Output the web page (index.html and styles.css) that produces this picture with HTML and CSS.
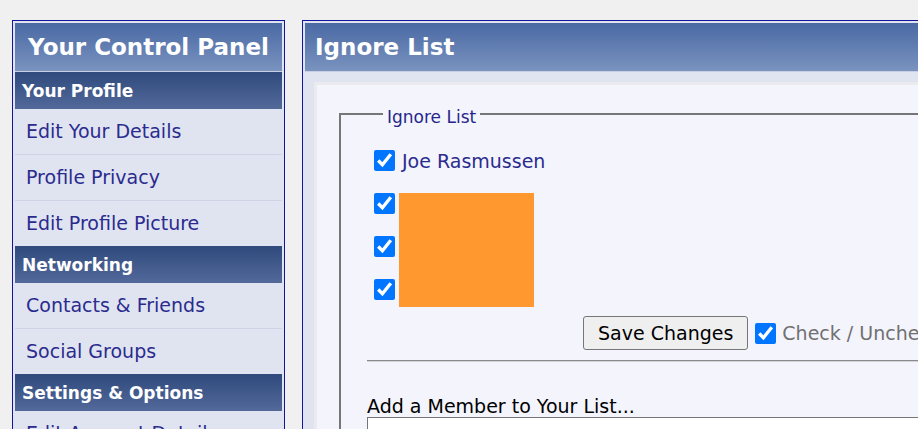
FILE: index.html
```html
<html>
	<head>
		<title>Ignore List</title>
		<link rel="stylesheet" href="styles.css">
	</head>
	<body>
		<div id="page">
			<div id="sidebar">
				<h2 class="panel-title">Your Control Panel</h2>

				<h3 class="section">Your Profile</h3>
				<ul class="links">
					<li>Edit Your Details</li>
					<li>Profile Privacy</li>
					<li>Edit Profile Picture</li>
				</ul>

				<h3 class="section">Networking</h3>
				<ul class="links">
					<li>Contacts &amp; Friends</li>
					<li>Social Groups</li>
				</ul>

				<h3 class="section">Settings &amp; Options</h3>
				<ul class="links">
					<li>Edit Account Details</li>
					<li>Edit Options</li>
				</ul>
			</div>

			<div id="main">
				<h2 class="panel-title left">Ignore List</h2>

				<div class="panel-body">
					<div class="box">
						<fieldset>
							<legend>Ignore List</legend>

							<div class="user-row">
								<input type="checkbox" checked>
								<span class="user-name">Joe Rasmussen</span>
							</div>

							<div class="hidden-users">
								<div class="checks">
									<div class="user-row"><input type="checkbox" checked></div>
									<div class="user-row"><input type="checkbox" checked></div>
									<div class="user-row"><input type="checkbox" checked></div>
								</div>
								<div class="redacted"></div>
							</div>

							<div class="save-row">
								<button>Save Changes</button>
								<input type="checkbox" checked>
								<span class="check-all">Check / Uncheck All</span>
							</div>

							<hr>

							<p class="add-label">Add a Member to Your List...</p>
							<input type="text" class="add-input">
						</fieldset>
					</div>
				</div>
			</div>
		</div>
	</body>
</html>
```

FILE: styles.css
```css
* {
	margin: 0;
	padding: 0;
}

body {
	background: #f0f0f0;
	font-family: "DejaVu Sans", sans-serif;
	overflow: hidden;
	white-space: nowrap;
}

#page {
	display: flex;
	align-items: flex-start;
	gap: 17px;
	padding: 20px 0 0 12px;
	width: 1600px;
}

#sidebar, #main {
	border: 1px solid #14149c;
	background: #e0e4f1;
	padding: 2px;
}

#sidebar {
	width: 267px;
}

#main {
	width: 1200px;
	height: 600px;
}

.panel-title {
	height: 48px;
	line-height: 48px;
	border-bottom: 1px solid #c8cfe2;
	background: linear-gradient(#4a69a4, #7a93bf);
	color: white;
	font-size: 23px;
	font-weight: bold;
	text-align: center;
}

.panel-title.left {
	text-align: left;
	padding-left: 10px;
}

.section {
	height: 35px;
	line-height: 35px;
	padding: 2px 0 0 7px;
	background: linear-gradient(#304a7d, #52699a);
	color: white;
	font-size: 17px;
	font-weight: bold;
}

.links {
	list-style: none;
}

.links li {
	height: 45px;
	line-height: 45px;
	padding-left: 11px;
	color: #2b2b8e;
	font-size: 19px;
}

.links li + li {
	border-top: 1px solid #d0d3e6;
}

.panel-body {
	padding: 10px 9px;
}

.box {
	border: 3px solid #ebebef;
	background: #f4f4fd;
	padding: 16px 0 0 22px;
	height: 500px;
}

fieldset {
	border: 2px solid #767676;
	padding: 12px 0 20px 26px;
}

legend {
	margin-left: 16px;
	padding: 6px 4px 0;
	color: #26268a;
	font-size: 17px;
	line-height: 20px;
}

.user-row {
	display: flex;
	align-items: center;
	height: 43px;
}

input[type="checkbox"] {
	width: 21px;
	height: 21px;
	margin: 0 4px 0 7px;
	accent-color: #0075ff;
}

.user-name {
	padding-left: 3px;
	color: #2b2b8e;
	font-size: 19px;
}

.hidden-users {
	display: flex;
	align-items: flex-start;
}

.redacted {
	width: 135px;
	height: 114px;
	margin-top: 11px;
	background: #fe982f;
}

.save-row {
	display: flex;
	align-items: center;
	margin: 5px 0 0 216px;
}

button {
	height: 34px;
	padding: 0 14px;
	border: 1px solid #767676;
	border-radius: 3px;
	background: #efefef;
	color: black;
	font-family: "DejaVu Sans", sans-serif;
	font-size: 19px;
}

.save-row input[type="checkbox"] {
	margin-left: 7px;
}

.check-all {
	padding-left: 2px;
	color: #707070;
	font-size: 19px;
}

hr {
	margin-top: 10px;
	height: 0;
	border: none;
	border-top: 1px solid #8a8a8a;
	border-bottom: 1px solid #d4d4d8;
}

.add-label {
	margin-top: 33px;
	color: black;
	font-size: 19px;
	line-height: 22px;
}

.add-input {
	display: block;
	width: 600px;
	height: 30px;
	border: 1px solid #767676;
	background: white;
}
```
